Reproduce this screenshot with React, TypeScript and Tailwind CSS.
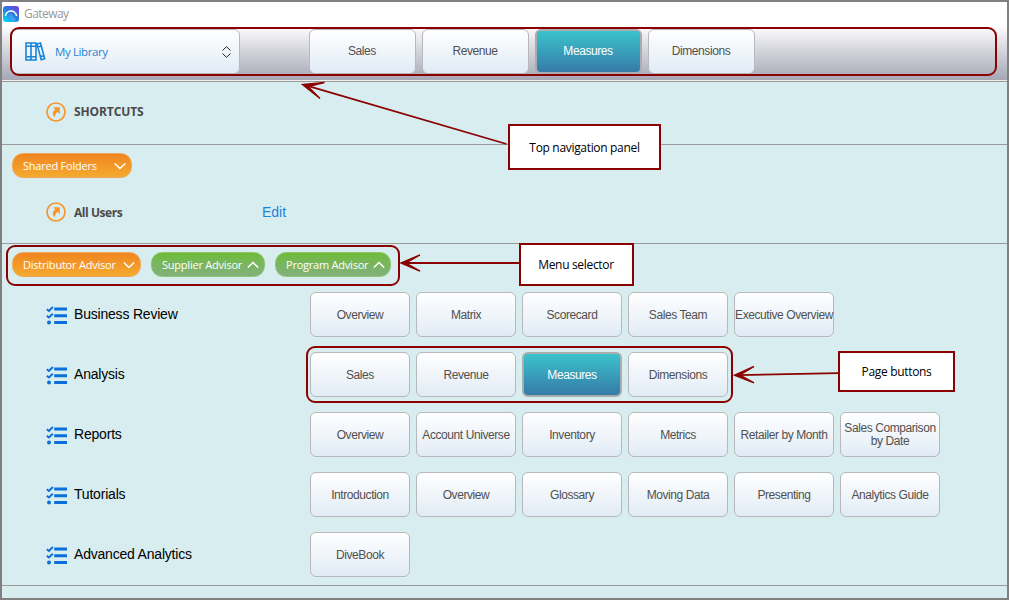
import type { ReactNode } from "react";

type Label = { text: string; active?: boolean };

const topPages: Label[] = [
  { text: "Sales" },
  { text: "Revenue" },
  { text: "Measures", active: true },
  { text: "Dimensions" },
];

const menuRows: { name: string; pages: Label[] }[] = [
  {
    name: "Business Review",
    pages: [
      { text: "Overview" },
      { text: "Matrix" },
      { text: "Scorecard" },
      { text: "Sales Team" },
      { text: "Executive Overview" },
    ],
  },
  { name: "Analysis", pages: topPages },
  {
    name: "Reports",
    pages: [
      { text: "Overview" },
      { text: "Account Universe" },
      { text: "Inventory" },
      { text: "Metrics" },
      { text: "Retailer by Month" },
      { text: "Sales Comparison by Date" },
    ],
  },
  {
    name: "Tutorials",
    pages: [
      { text: "Introduction" },
      { text: "Overview" },
      { text: "Glossary" },
      { text: "Moving Data" },
      { text: "Presenting" },
      { text: "Analytics Guide" },
    ],
  },
  { name: "Advanced Analytics", pages: [{ text: "DiveBook" }] },
];

const ui = "font-['Open_Sans','Noto_Sans',sans-serif]";

function PageButton({ page, wide }: { page: Label; wide?: boolean }) {
  return (
    <button
      className={`flex h-[45px] shrink-0 items-center justify-center rounded-md text-center text-[12px] leading-[13px] tracking-[-0.42px] ${
        wide ? "w-[107px] pr-px pb-px" : "w-[100px] pt-px"
      } ${
        page.active
          ? "border-2 border-[#a9adb0] bg-linear-to-b from-[#3bc3cb] to-[#357ba8] text-white"
          : "border border-[#b8b8ba] bg-linear-to-b from-white to-[#e1ebf5] text-[#505050]"
      }`}
    >
      <span className={page.text.length > 20 ? "" : "whitespace-nowrap"}>{page.text}</span>
    </button>
  );
}

function Pill({ text, color, width, open }: { text: string; color: string; width: string; open?: boolean }) {
  return (
    <button
      className={`flex h-[25px] items-center justify-between rounded-[11px] border pr-[5px] pl-[10px] text-[11px] tracking-[-0.22px] text-white ${ui} ${color} ${width}`}
    >
      <span className="pt-px whitespace-nowrap">{text}</span>
      <svg width="12" height="8" viewBox="0 0 12 8" fill="none" stroke="white" strokeWidth="1.5">
        <path d={open ? "M.8 6.500 6 1.500 11.200 6.500" : "M.8 1.500 6 6.500 11.200 1.500"} />
      </svg>
    </button>
  );
}

function ShortcutIcon() {
  return (
    <svg width="20" height="20" viewBox="0 0 20 20" fill="none">
      <circle cx="10" cy="10" r="9" stroke="#f6952a" strokeWidth="1.7" />
      <path
        d="M7.200 5.200h6.600v6.900l-2.200-2.100c-1.700 1-2.500 2.600-2.600 5.100-3-2.300-3-5.600.4-7.700z"
        fill="#f6952a"
      />
    </svg>
  );
}

function ChecklistIcon() {
  return (
    <svg className="mt-px" width="22" height="19" viewBox="0 0 22 19" fill="none">
      <path d="M.8 3.200 2.900 5 6.800 1M.8 9.700l2.100 1.800 3.900-3.700" stroke="#0a6fdc" strokeWidth="1.900" />
      <circle cx="3" cy="16.500" r="2" fill="#0a6fdc" />
      <path d="M8.200 3h12.800M8.200 9.800h12.800M8.200 16.400h12.800" stroke="#0a6fdc" strokeWidth="3" />
    </svg>
  );
}

function LibraryIcon() {
  return (
    <svg width="21" height="19" viewBox="0 0 21 19" fill="none" stroke="#1a84d6" strokeWidth="1.6">
      <path d="M1 1h5v17H1zM6 1h5v17H6zM1 4.200h10M1 14.700h10M12 1.900l3.500-.9 4.200 15.800-3.500.9zM12.800 5l3.500-.9M15.500 14.500l3.500-.9" />
    </svg>
  );
}

function LogoIcon() {
  return (
    <svg width="16" height="16" viewBox="0 0 16 16">
      <defs>
        <linearGradient id="logo" x1="0.9" y1="0" x2="0.1" y2="1">
          <stop offset="0" stopColor="#7b3be0" />
          <stop offset="0.5" stopColor="#237fe0" />
          <stop offset="1" stopColor="#00dff5" />
        </linearGradient>
      </defs>
      <rect width="16" height="16" rx="3" fill="url(#logo)" />
      <path d="M2.300 10C3.300 6.600 5.300 5 8 5s4.700 1.600 5.700 5" fill="none" stroke="white" strokeWidth="1.500" />
      <path d="M5.500 10.200C6.200 8.400 7 7.700 8.300 7.700L14 15.500H9z" fill="#5ca7ee" opacity=".6" />
    </svg>
  );
}

function Callout({ place, children }: { place: string; children: ReactNode }) {
  return (
    <div
      className={`absolute flex items-center justify-center border-2 border-[#8b0000] bg-white pt-px text-[12px] tracking-[-0.32px] whitespace-nowrap text-black ${ui} ${place}`}
    >
      {children}
    </div>
  );
}

function Annotations() {
  return (
    <div className="pointer-events-none absolute -top-[2px] -left-[2px] h-[600px] w-[1009px]">
      <div className="absolute top-[27px] left-[10px] h-[49px] w-[987px] rounded-[9px] border-2 border-[#8b0000]" />
      <div className="absolute top-[245px] left-[6px] h-[41px] w-[394px] rounded-[9px] border-2 border-[#8b0000]" />
      <div className="absolute top-[346px] left-[306px] h-[57px] w-[427px] rounded-[9px] border-2 border-[#8b0000]" />
      <svg className="absolute inset-0" width="1009" height="600" fill="none" stroke="#8b0000">
        <path strokeWidth="1.800" d="M506.500 144 306 85.300M519 263H404M838 373.200 738 375.200" />
        <path
          strokeWidth="1.400"
          fill="#8b0000"
          d="M324.500 82.500 302.500 84.500 320 98.500 308 86.500zM420 255 401 263 420 271 406 263zM754 366.500 734.500 375.200 754 382.800 740 375z"
        />
      </svg>
      <Callout place="top-[124px] left-[508px] h-[46px] w-[153px]">Top navigation panel</Callout>
      <Callout place="top-[243px] left-[519px] h-[43px] w-[115px] pr-px">Menu selector</Callout>
      <Callout place="top-[351px] left-[838px] h-[41px] w-[117px]">Page buttons</Callout>
    </div>
  );
}

export default function App() {
  const orange = "border-[#f0a95c] bg-linear-to-b from-[#f08520] to-[#f4aa30]";
  const green = "border-[#8fc473] bg-linear-to-b from-[#6fbb35] to-[#82b07c]";
  return (
    <div className="relative flex h-[600px] w-[1009px] flex-col overflow-hidden border-2 border-[#808080] bg-[#d8edf0] font-['Liberation_Sans',Arial,sans-serif]">
      <header className={`flex h-[23px] shrink-0 items-center bg-white pl-px text-[12px] tracking-[-0.55px] text-[#999] ${ui}`}>
        <LogoIcon />
        <span className="ml-[5px]">Gateway</span>
      </header>

      <nav className="flex h-[55px] shrink-0 bg-linear-to-b from-white to-[#a5a7b5] pt-[4px] pl-[8px]">
        <button
          className={`flex h-[45px] w-[230px] items-center rounded-md border border-[#b8b8ba] bg-linear-to-b from-white to-[#e1ebf5] pl-[14px] text-[11.5px] tracking-[-0.4px] text-[#1a84d6] ${ui}`}
        >
          <LibraryIcon />
          <span className="ml-[9px] pt-px">My Library</span>
          <svg className="mr-[8px] ml-auto" width="9" height="12" viewBox="0 0 9 12" fill="none" stroke="#222" strokeWidth="1">
            <path d="M.5 4.500 4.500.7 8.500 4.500M.5 7.500l4 3.800 4-3.800" />
          </svg>
        </button>
        <div className="ml-[69px] flex gap-[6px]">
          {topPages.map((p) => (
            <PageButton key={p.text} page={p} wide />
          ))}
        </div>
      </nav>

      <section className={`h-[65px] shrink-0 border-t border-b border-t-[#eee] border-b-[#9a9a9a] text-[12px] font-bold tracking-[-0.1px] text-[#4a4a4a] ${ui}`}>
        <div className="flex h-full w-full items-center border-t border-[#999] pb-[3px] pl-[44px]">
          <ShortcutIcon />
          <span className="ml-[8px] pt-px">SHORTCUTS</span>
        </div>
      </section>

      <section className="flex h-[99px] shrink-0 flex-col border-b border-[#9a9a9a] pt-[8px]">
        <div className="pl-[10px]">
          <Pill text="Shared Folders" color={orange} width="w-[120px]" />
        </div>
        <div className="mt-[24px] flex h-5 items-center pl-[44px]">
          <ShortcutIcon />
          <span className={`ml-[8px] w-[188px] pt-px text-[12px] font-bold tracking-[-0.45px] text-[#4a4a4a] ${ui}`}>
            All Users
          </span>
          <a className="text-[14px] text-[#1a84d6]">Edit</a>
        </div>
      </section>

      <section className="h-[342px] shrink-0 border-b border-[#9a9a9a] pt-[8px]">
        <div className="flex pl-[10px]">
          <Pill text="Distributor Advisor" color={orange} width="w-[129px]" />
          <div className="ml-[10px] flex gap-[10px]">
            <Pill text="Supplier Advisor" color={green} width="w-[114px]" open />
            <Pill text="Program Advisor" color={green} width="w-[116px]" open />
          </div>
        </div>
        <div className="mt-[15px] flex flex-col gap-[15px]">
          {menuRows.map((row) => (
            <div key={row.name} className="flex h-[45px] items-center pl-[44px]">
              <ChecklistIcon />
              <span className="ml-[6px] w-[236px] text-[14px] tracking-[-0.2px] text-black">{row.name}</span>
              <div className="flex gap-[6px]">
                {row.pages.map((p) => (
                  <PageButton key={p.text} page={p} />
                ))}
              </div>
            </div>
          ))}
        </div>
      </section>

      <Annotations />
    </div>
  );
}
